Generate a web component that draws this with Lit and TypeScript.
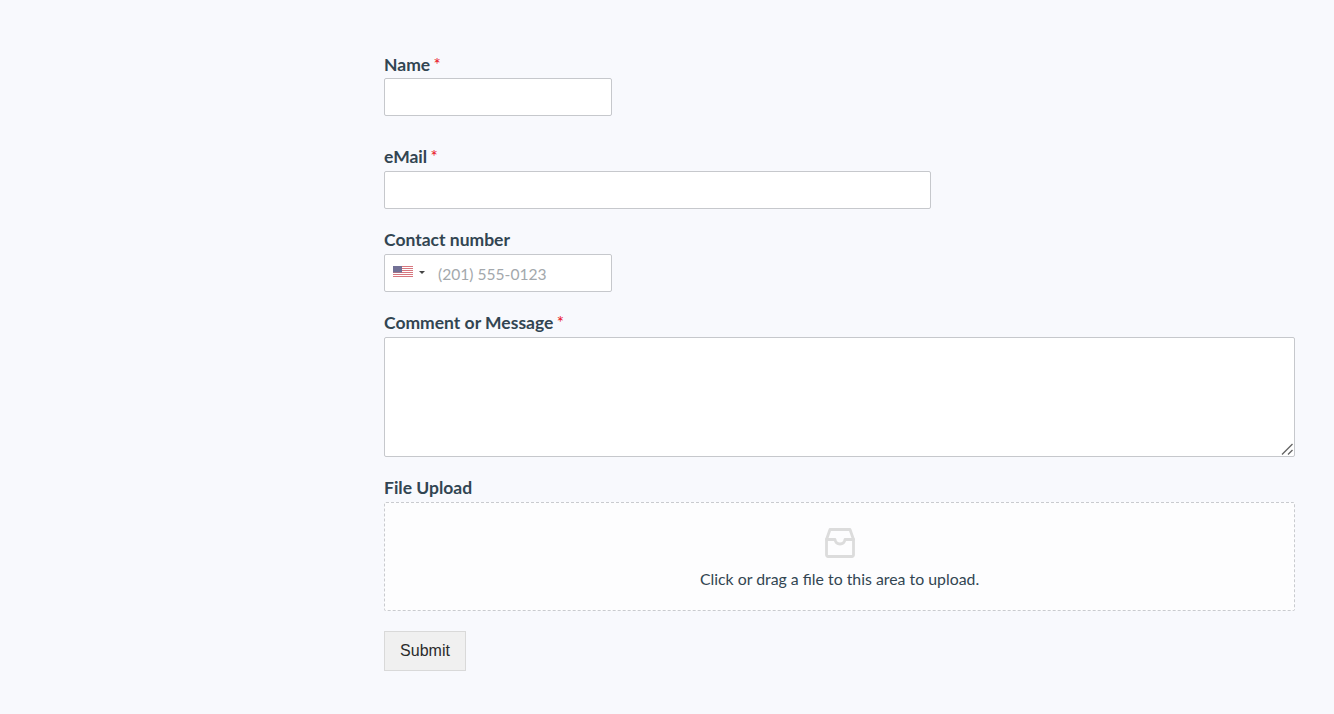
import { LitElement, html, css } from "lit";
import { customElement } from "lit/decorators.js";

@customElement("app-root")
export class AppRoot extends LitElement {
  static styles = css`
    :host {
      display: block;
      min-height: 714px;
      box-sizing: border-box;
      background: #f8f9fd;
      padding: 54px 39px 43px 384px;
      font-family: "Lato", "Noto Sans", sans-serif;
      color: #324552;
    }
    form { display: flex; flex-direction: column; }
    .field { display: flex; flex-direction: column; margin-bottom: 21px; }
    .field.first { margin-bottom: 31px; }
    .field.last { margin-bottom: 20px; }
    label {
      height: 24px;
      line-height: 19px;
      font-size: 17.5px;
      font-weight: 700;
      color: #324552;
      white-space: nowrap;
    }
    .first label { line-height: 21px; }
    .req { color: #e8101c; font-size: 17px; font-weight: 400; margin-left: -1px; }
    input, textarea {
      box-sizing: border-box;
      border: 1px solid #c6c8cc;
      border-radius: 2px;
      background: #fff;
      margin: 0;
      outline: none;
      display: block;
    }
    .short { width: 228px; height: 38px; }
    .mid { width: 547px; height: 38px; }
    .area { position: relative; width: 911px; height: 120px; }
    textarea { width: 100%; height: 100%; resize: none; }
    .grip { position: absolute; right: 2px; bottom: 2px; width: 12px; height: 12px; display: block; }
    .phone {
      box-sizing: border-box;
      width: 228px;
      height: 38px;
      border: 1px solid #c6c8cc;
      border-radius: 2px;
      background: #fff;
      display: flex;
      align-items: center;
      padding-left: 8px;
    }
    .flag { width: 20px; height: 12px; display: block; margin-top: -2px; opacity: 0.72; }
    .caret {
      width: 0; height: 0;
      border-left: 3px solid transparent;
      border-right: 3px solid transparent;
      border-top: 3.5px solid #444;
      margin: -1px 0 0 6px;
    }
    .ph {
      margin: 2px 0 0 13px;
      font-size: 15.6px;
      color: #a3a8ac;
      white-space: nowrap;
    }
    .drop {
      box-sizing: border-box;
      width: 911px;
      height: 109px;
      border: 1px dashed #c9cbcf;
      border-radius: 2px;
      background: #fdfdfe;
      display: flex;
      flex-direction: column;
      align-items: center;
      padding-top: 24px;
    }
    .drop svg { width: 32px; height: 32px; display: block; }
    .drop p { margin: 9px 0 0; font-size: 15.85px; line-height: 22px; color: #324552; white-space: nowrap; }
    button {
      align-self: flex-start;
      box-sizing: border-box;
      width: 82px;
      height: 40px;
      background: #f0f0f0;
      border: 1px solid #d9d9d9;
      border-radius: 0;
      font-family: "Liberation Sans", Arial, sans-serif;
      font-size: 16px;
      color: #2b2b2b;
      padding: 0;
    }
  `;

  render() {
    return html`
      <form>
        <div class="field first">
          <label>Name <span class="req">*</span></label>
          <input class="short" type="text" />
        </div>
        <div class="field">
          <label>eMail <span class="req">*</span></label>
          <input class="mid" type="text" />
        </div>
        <div class="field">
          <label>Contact number</label>
          <div class="phone">
            <svg class="flag" viewBox="0 0 20 12" aria-hidden="true">
              <rect width="20" height="12" fill="#fff" />
              <g fill="#c8434f">
                <rect width="20" height="1" y="0" /><rect width="20" height="1" y="2" />
                <rect width="20" height="1" y="4" /><rect width="20" height="1" y="6" />
                <rect width="20" height="1" y="8" /><rect width="20" height="1" y="10" />
              </g>
              <rect width="9" height="6.5" fill="#3c3b6e" />
            </svg>
            <span class="caret"></span>
            <span class="ph">(201) 555-0123</span>
          </div>
        </div>
        <div class="field">
          <label>Comment or Message <span class="req">*</span></label>
          <div class="area">
            <textarea></textarea>
            <svg class="grip" viewBox="0 0 12 12" stroke="#666" stroke-width="1.4" aria-hidden="true">
              <path d="M1 11.500 11.500 1M7 11.500 11.500 7" />
            </svg>
          </div>
        </div>
        <div class="field last">
          <label>File Upload</label>
          <div class="drop">
            <svg viewBox="0 0 32 32" fill="none" stroke="#dcdcdc" stroke-width="2.8" stroke-linejoin="round" stroke-linecap="round" aria-hidden="true">
              <path d="M6 2.500h20l3.500 10V28a1.500 1.500 0 0 1-1.500 1.500H4A1.500 1.500 0 0 1 2.500 28V12.500z" />
              <path d="M2.500 12.500H11c.5 3 2.300 4.500 5 4.500s4.500-1.500 5-4.500h8.500" />
            </svg>
            <p>Click or drag a file to this area to upload.</p>
          </div>
        </div>
        <button type="button">Submit</button>
      </form>
    `;
  }
}
